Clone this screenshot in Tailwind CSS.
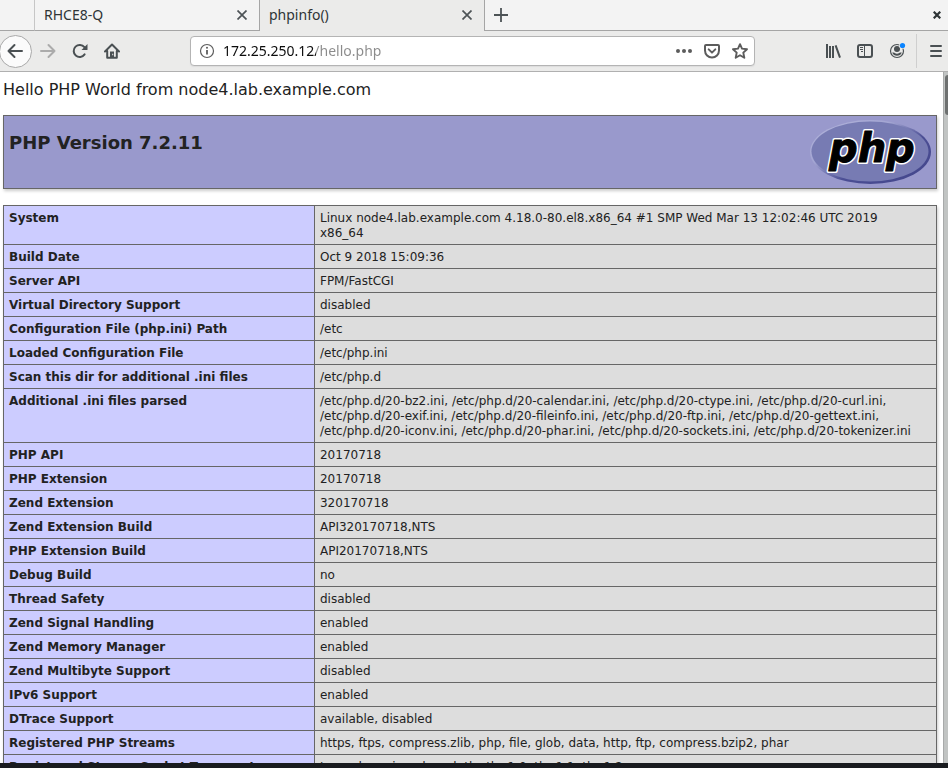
<!DOCTYPE html>
<html lang="en">

<head>
    <meta charset="utf-8">
    <meta name="viewport" content="width=device-width, initial-scale=1">
    <title>phpinfo()</title>
    <script src="https://cdn.jsdelivr.net/npm/@tailwindcss/browser@4"></script>
</head>

<body class="h-screen flex flex-col overflow-hidden bg-white font-['DejaVu_Sans',sans-serif] text-[#222]">

    <!-- tabs -->
    <div class="flex h-[31px] shrink-0 bg-[#f3f3f3] text-sm text-[#2e3436] font-['Noto_Sans',sans-serif]">
        <div class="w-[35px] border-r border-b border-r-[#c6c6c6] border-b-[#a5a5a5]"></div>
        <div class="flex w-[225px] items-center justify-between border-r border-b border-[#a5a5a5] pl-[9px] pr-3">
            <a href="#">RHCE8-Q</a>
            <button type="button" aria-label="Close tab">
                <svg class="size-[10px]" viewBox="0 0 10 10" fill="none" stroke="#4d5356" stroke-width="1.7">
                    <path d="M.5.5l9 9M9.5.5l-9 9" />
                </svg>
            </button>
        </div>
        <div class="flex w-[225px] items-center justify-between border-r border-[#a5a5a5] bg-[#ebebea] pl-[9px] pr-3 pb-px">
            <a href="#">phpinfo()</a>
            <button type="button" aria-label="Close tab">
                <svg class="size-[10px]" viewBox="0 0 10 10" fill="none" stroke="#4d5356" stroke-width="1.7">
                    <path d="M.5.5l9 9M9.5.5l-9 9" />
                </svg>
            </button>
        </div>
        <div class="flex flex-1 items-center justify-between border-b border-[#a5a5a5] pl-[9px] pr-[7px]">
            <button type="button" aria-label="New tab">
                <svg class="size-[14px]" viewBox="0 0 14 14" fill="none" stroke="#4d5356" stroke-width="1.8">
                    <path d="M7 0v14M0 7h14" />
                </svg>
            </button>
            <button type="button" aria-label="Close window">
                <svg class="size-[8px]" viewBox="0 0 8 8" fill="none" stroke="#2e3436" stroke-width="2.2">
                    <path d="M.7.7l6.6 6.6M7.3.7L.7 7.3" />
                </svg>
            </button>
        </div>
    </div>

    <!-- toolbar -->
    <div class="flex h-[41px] shrink-0 items-center border-b border-[#b0b0b0] bg-[#ebebea] text-[#4a5053]">
        <button type="button" aria-label="Back"
            class="-ml-px flex size-[33px] shrink-0 items-center justify-center rounded-full border border-[#a9a9a9] bg-[#fbfbfb] pr-px">
            <svg class="size-4" viewBox="0 0 16 16" fill="none" stroke="currentColor" stroke-width="2"
                stroke-linecap="round" stroke-linejoin="round">
                <path d="M15 8H1.5M7.5 2l-6 6 6 6" />
            </svg>
        </button>
        <button type="button" aria-label="Forward" class="flex w-8 shrink-0 justify-center text-[#ababab]">
            <svg class="size-4" viewBox="0 0 16 16" fill="none" stroke="currentColor" stroke-width="2"
                stroke-linecap="round" stroke-linejoin="round">
                <path d="M1 8h13.5M8.5 2l6 6-6 6" />
            </svg>
        </button>
        <button type="button" aria-label="Reload" class="flex w-8 shrink-0 justify-center">
            <svg class="size-4" viewBox="0 0 16 16" fill="none" stroke="currentColor" stroke-width="2"
                stroke-linecap="round">
                <path d="M12.6 11.4A6 6 0 1 1 12.4 4.2" />
                <path d="M15.5 1v5.5a.5.5 0 0 1-.5.5H9.5z" fill="currentColor" stroke="none" />
            </svg>
        </button>
        <button type="button" aria-label="Home" class="flex w-8 shrink-0 justify-center">
            <svg class="size-4" viewBox="0 0 16 16" fill="none" stroke="currentColor" stroke-width="2"
                stroke-linecap="round" stroke-linejoin="round">
                <path d="M1 8.5l7-7 7 7M3.2 8v6.8h9.6V8" />
                <path d="M6 15V8.5h4V15z" fill="currentColor" stroke="none" />
                <path d="M8.2 10.8h1v1.4h-1z" fill="#ebebea" stroke="none" />
            </svg>
        </button>

        <div
            class="mx-[62px] flex h-[30px] flex-1 items-center rounded border border-[#b4b4b4] bg-white pl-2 text-[#5c5c5c] shadow-[0_1px_1px_#ddd]">
            <svg class="size-4 shrink-0" viewBox="0 0 16 16" fill="none" stroke="currentColor">
                <circle cx="8" cy="8" r="6.5" stroke-width="1.2" />
                <path d="M8 7v4.5" stroke-width="1.8" />
                <circle cx="8" cy="4.8" r="1" fill="currentColor" stroke="none" />
            </svg>
            <input type="text" aria-label="Address" value="172.25.250.12/hello.php"
                class="min-w-0 flex-1 bg-[linear-gradient(to_right,#0c0c0c_101px,#8b8b8b_101px)] bg-clip-text pl-2 text-sm text-transparent outline-none font-['Noto_Sans',sans-serif]">
            <button type="button" aria-label="Page actions" class="flex w-7 justify-center">
                <svg class="size-4" viewBox="0 0 16 16" fill="currentColor">
                    <circle cx="2" cy="8" r="2" />
                    <circle cx="8" cy="8" r="2" />
                    <circle cx="14" cy="8" r="2" />
                </svg>
            </button>
            <button type="button" aria-label="Save to Pocket" class="flex w-7 justify-center">
                <svg class="size-4" viewBox="0 0 16 16" fill="none" stroke="currentColor" stroke-width="2"
                    stroke-linecap="round" stroke-linejoin="round">
                    <path d="M2 2h12a1 1 0 0 1 1 1v4.5a7 7 0 0 1-14 0V3a1 1 0 0 1 1-1z" />
                    <path d="M4.7 6.4L8 9.6l3.3-3.2" />
                </svg>
            </button>
            <button type="button" aria-label="Bookmark this page" class="flex w-7 justify-center">
                <svg class="size-4" viewBox="0 0 16 16" fill="none" stroke="currentColor" stroke-width="1.9"
                    stroke-linejoin="round">
                    <path d="M8 1.2l2 4.4 5 .6-3.7 3.4 1 5.2L8 12.3l-4.3 2.5 1-5.2L1 6.2l5-.6z" />
                </svg>
            </button>
        </div>

        <button type="button" aria-label="Library" class="flex w-8 shrink-0 justify-center">
            <svg class="size-4" viewBox="0 0 16 16" fill="none" stroke="currentColor" stroke-width="2">
                <path d="M2 1v14M5 3v12M8 3v12M10.6 2.400l4.400 12.300" />
            </svg>
        </button>
        <button type="button" aria-label="Sidebars" class="flex w-8 shrink-0 justify-center">
            <svg class="size-4" viewBox="0 0 16 16" fill="none" stroke="currentColor">
                <rect x="1" y="2" width="14" height="12" rx="2" stroke-width="2" />
                <path d="M7.5 2v12M3 4.5h3M3 6.5h3M4 8.5h2" stroke-width="1" />
            </svg>
        </button>
        <button type="button" aria-label="Account" class="flex w-8 shrink-0 justify-center">
            <svg class="size-4 overflow-visible" viewBox="0 0 16 16" fill="currentColor">
                <circle cx="8" cy="8" r="6.5" fill="none" stroke="currentColor" stroke-width="1.2" />
                <circle cx="8" cy="6" r="3" />
                <path d="M3.2 9.5c1 0 1.600 0 2.300.2a4 4 0 0 0 5 0c.7-.2 1.300-.2 2.300-.2a5.200 5.200 0 0 1-9.600 0z" />
                <circle cx="13.5" cy="2.5" r="3.3" fill="#ebebea" />
                <circle cx="13.5" cy="2.5" r="2.6" fill="#0a84ff" />
            </svg>
        </button>
        <div class="ml-[3px] h-[34px] w-px shrink-0 bg-[#cfcfcf]"></div>
        <button type="button" aria-label="Menu" class="flex w-[31px] shrink-0 justify-center pl-[6px]">
            <svg class="h-4 w-3" viewBox="0 0 12 16" fill="none" stroke="currentColor" stroke-width="2"
                stroke-linecap="round">
                <path d="M1 3h10M1 8h10M1 13h10" />
            </svg>
        </button>
    </div>

    <!-- page -->
    <div class="flex min-h-0 flex-1">
        <main class="flex min-w-0 flex-1 flex-col gap-4 overflow-hidden pt-2 pl-[3px] pr-[6px]">
            <p class="text-base leading-[19px]">Hello PHP World from node4.lab.example.com</p>

            <div
                class="flex h-[74px] shrink-0 justify-between border border-[#666] bg-[#9999cc] px-[5px] pt-1 shadow-[1px_2px_3px_#ccc]">
                <h1 class="pt-3 text-lg leading-[22px] font-bold">PHP Version 7.2.11</h1>
                <svg class="h-16 w-[121px]" viewBox="0 0 121 64" role="img" aria-label="PHP logo">
                    <defs>
                        <linearGradient id="rim" x1="0" y1="0" x2="1" y2="1">
                            <stop offset="0" stop-color="#b4b6dc" />
                            <stop offset=".35" stop-color="#a3a5d2" />
                            <stop offset=".6" stop-color="#4b4e94" />
                            <stop offset="1" stop-color="#42458a" />
                        </linearGradient>
                    </defs>
                    <ellipse cx="60.5" cy="32" rx="60.5" ry="32" fill="url(#rim)" />
                    <ellipse cx="60" cy="31.5" rx="58.5" ry="30" fill="#777bb3" />
                    <g font-family="DejaVu Sans" font-weight="bold" font-style="italic" font-size="40"
                        stroke-linejoin="round">
                        <text x="19" y="42" stroke="#fff" stroke-width="4">php</text>
                        <text x="19" y="42" stroke="#000" stroke-width="1">php</text>
                    </g>
                </svg>
            </div>

            <table class="w-full table-fixed border-collapse text-xs leading-[15px] shadow-[1px_2px_3px_#ccc] [&_td]:border [&_td]:border-[#666] [&_td]:bg-[#ddd] [&_td]:px-[5px] [&_td]:pt-[5px] [&_td]:pb-[3px] [&_td]:align-top [&_th]:w-1/3 [&_th]:border [&_th]:border-[#666] [&_th]:bg-[#ccccff] [&_th]:px-[5px] [&_th]:pt-[5px] [&_th]:pb-[3px] [&_th]:text-left [&_th]:align-top">
                <tbody>
                    <tr><th scope="row">System</th><td>Linux node4.lab.example.com 4.18.0-80.el8.x86_64 #1 SMP Wed Mar 13 12:02:46 UTC 2019<br>x86_64</td></tr>
                    <tr><th scope="row">Build Date</th><td>Oct 9 2018 15:09:36</td></tr>
                    <tr><th scope="row">Server API</th><td>FPM/FastCGI</td></tr>
                    <tr><th scope="row">Virtual Directory Support</th><td>disabled</td></tr>
                    <tr><th scope="row">Configuration File (php.ini) Path</th><td>/etc</td></tr>
                    <tr><th scope="row">Loaded Configuration File</th><td>/etc/php.ini</td></tr>
                    <tr><th scope="row">Scan this dir for additional .ini files</th><td>/etc/php.d</td></tr>
                    <tr><th scope="row">Additional .ini files parsed</th><td>/etc/php.d/20-bz2.ini, /etc/php.d/20-calendar.ini, /etc/php.d/20-ctype.ini, /etc/php.d/20-curl.ini, /etc/php.d/20-exif.ini, /etc/php.d/20-fileinfo.ini, /etc/php.d/20-ftp.ini, /etc/php.d/20-gettext.ini, /etc/php.d/20-iconv.ini, /etc/php.d/20-phar.ini, /etc/php.d/20-sockets.ini, /etc/php.d/20-tokenizer.ini</td></tr>
                    <tr><th scope="row">PHP API</th><td>20170718</td></tr>
                    <tr><th scope="row">PHP Extension</th><td>20170718</td></tr>
                    <tr><th scope="row">Zend Extension</th><td>320170718</td></tr>
                    <tr><th scope="row">Zend Extension Build</th><td>API320170718,NTS</td></tr>
                    <tr><th scope="row">PHP Extension Build</th><td>API20170718,NTS</td></tr>
                    <tr><th scope="row">Debug Build</th><td>no</td></tr>
                    <tr><th scope="row">Thread Safety</th><td>disabled</td></tr>
                    <tr><th scope="row">Zend Signal Handling</th><td>enabled</td></tr>
                    <tr><th scope="row">Zend Memory Manager</th><td>enabled</td></tr>
                    <tr><th scope="row">Zend Multibyte Support</th><td>disabled</td></tr>
                    <tr><th scope="row">IPv6 Support</th><td>enabled</td></tr>
                    <tr><th scope="row">DTrace Support</th><td>available, disabled</td></tr>
                    <tr><th scope="row">Registered PHP Streams</th><td>https, ftps, compress.zlib, php, file, glob, data, http, ftp, compress.bzip2, phar</td></tr>
                    <tr><th scope="row">Registered Stream Socket Transports</th><td>tcp, udp, unix, udg, ssl, tls, tlsv1.0, tlsv1.1, tlsv1.2</td></tr>
                </tbody>
            </table>
        </main>
        <!-- scrollbar -->
        <div class="w-[5px] border-l border-[#a8aaaa] bg-[#c1c4c3] pt-[3px] pl-px">
            <div class="h-10 rounded-l bg-[#6d7070]"></div>
        </div>
    </div>
    <div class="h-[5px] shrink-0 bg-[#191b1f]"></div>
</body>

</html>
